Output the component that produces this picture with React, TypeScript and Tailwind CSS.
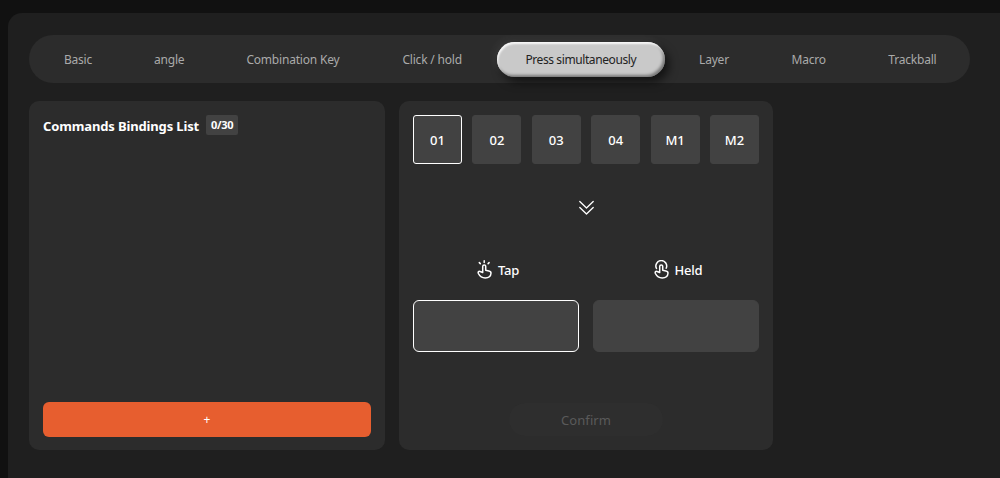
import { useState } from 'react';
import clsx from 'clsx';

const tabs = [
  { label: 'Basic', width: 'w-[84px]' },
  { label: 'angle', width: 'w-[87px]' },
  { label: 'Combination Key', width: 'w-[149px]' },
  { label: 'Click / hold', width: 'w-[118px]' },
  { label: 'Press simultaneously', width: 'w-[168px]' },
  { label: 'Layer', width: 'w-[87px]' },
  { label: 'Macro', width: 'w-[91px]' },
  { label: 'Trackball', width: 'w-[105px]' },
];

const keys = ['01', '02', '03', '04', 'M1', 'M2'];

const Hand = () => (
  <path d="M5.7 12.5V6.4a1.5 1.5 0 0 1 3 0v3.900l3.200.6c1.500.3 2.200 1.200 2.100 2.400-.2 2.800-2.600 4.700-5.800 4.700-2.900 0-5.300-1.500-6.800-4.500-.4-.9-.3-1.700.4-2 .7-.3 1.400-.1 2 .3z" />
);

const TapIcon = () => (
  <svg className="h-[19px] w-[15px]" viewBox="0 0 15 19" fill="none" stroke="currentColor" strokeWidth="1.5" strokeLinecap="round" strokeLinejoin="round">
    <Hand />
    <path d="M7.2.8v1.7M2.3 2.6l1 1M12.1 2.6l-1 1" />
  </svg>
);

const HeldIcon = () => (
  <svg className="h-[19px] w-[15px]" viewBox="0 0 15 19" fill="none" stroke="currentColor" strokeWidth="1.5" strokeLinecap="round" strokeLinejoin="round">
    <Hand />
    <path d="M2.5 8.5A5.4 5.4 0 1 1 12.2 8.2" />
  </svg>
);

export default function App() {
  const [activeTab, setActiveTab] = useState('Press simultaneously');
  const [activeKey, setActiveKey] = useState('01');
  const [slot, setSlot] = useState('Tap');

  return (
    <div className="h-[478px] overflow-hidden bg-[#111111] pt-[13px] pl-2 font-['Noto_Sans',sans-serif] text-white">
      <div className="h-full rounded-tl-[14px] bg-[#1f1f1f] pt-[22px] pl-[21px]">
        <nav className="flex h-12 w-[941px] items-center justify-between rounded-full bg-[#2c2c2c] pr-[5px] pl-[7px]">
          {tabs.map((tab) => (
            <button
              key={tab.label}
              onClick={() => setActiveTab(tab.label)}
              className={clsx(
                'h-[35px] shrink-0 rounded-full pt-px text-[12px] whitespace-nowrap',
                tab.width,
                activeTab === tab.label
                  ? 'bg-[#c9c9c9] tracking-[-0.4px] text-[#222222] shadow-[4px_5px_10px_rgba(0,0,0,0.6),-3px_-3px_8px_rgba(255,255,255,0.06),inset_1px_2px_2px_rgba(255,255,255,0.85),inset_-2px_-2px_3px_rgba(0,0,0,0.4)]'
                  : 'tracking-[-0.2px] text-[#aaaaaa]'
              )}
            >
              {tab.label}
            </button>
          ))}
        </nav>

        <div className="mt-[18px] flex gap-[14px]">
          <section className="flex h-[349px] w-[356px] flex-col justify-between rounded-[10px] bg-[#2c2c2c] p-[14px] pb-[13.5px]">
            <div className="flex items-start gap-[7px]">
              <h2 className="text-[13px] leading-[22px] font-bold tracking-[-0.14px] whitespace-nowrap">Commands Bindings List</h2>
              <span className="flex h-[20px] w-8 items-center justify-center rounded-[2px] bg-[#424242] text-[11px] font-bold tracking-[-0.3px]">0/30</span>
            </div>
            <button className="h-[35px] rounded-md bg-[#e75e2f] pt-px text-[12px]">+</button>
          </section>

          <section className="flex h-[349px] w-[374px] flex-col rounded-[10px] bg-[#2c2c2c] p-[14px]">
            <div className="flex justify-between">
              {keys.map((key) => (
                <button
                  key={key}
                  onClick={() => setActiveKey(key)}
                  className={clsx(
                    'size-[49px] rounded-[3px] border bg-[#424242] pt-0.5 text-[13px] font-medium',
                    activeKey === key ? 'border-white' : 'border-[#424242]'
                  )}
                >
                  {key}
                </button>
              ))}
            </div>

            <svg className="mt-[36px] ml-[165px] h-4 w-4" viewBox="0 0 16 16" fill="none" stroke="currentColor" strokeWidth="1.3" strokeLinecap="round" strokeLinejoin="round">
              <path d="M1.8 1.5 8.5 8l6.7-6.5M1.8 7.5 8.5 14l6.7-6.5" />
            </svg>

            <div className="mt-[43px] flex justify-between">
              {['Tap', 'Held'].map((name) => (
                <div key={name} className="flex w-[166px] flex-col items-center">
                  <div className="flex h-[21px] items-center gap-[6px] pl-1 text-[13px] font-medium tracking-[-0.2px]">
                    {name === 'Tap' ? <TapIcon /> : <HeldIcon />}
                    <span className="pt-0.5">{name}</span>
                  </div>
                  <button
                    aria-label={name}
                    onClick={() => setSlot(name)}
                    className={clsx(
                      'mt-5 h-[52px] w-full rounded-md border bg-[#424242]',
                      slot === name ? 'border-white' : 'border-[#424242]'
                    )}
                  />
                </div>
              ))}
            </div>

            <button disabled className="mt-[51px] h-[33px] w-[154px] self-center rounded-full bg-[#2e2e2e] pt-0.5 text-[13px] tracking-[0.1px] text-[#5a5a5a]">
              Confirm
            </button>
          </section>
        </div>
      </div>
    </div>
  );
}
